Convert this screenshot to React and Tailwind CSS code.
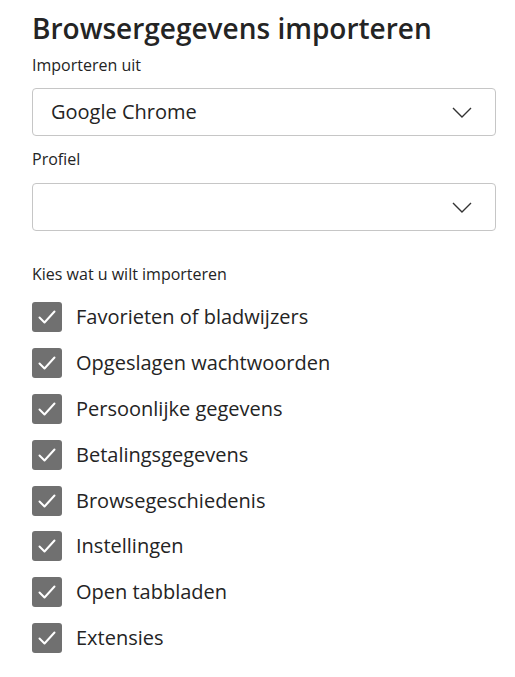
import { useState } from "react";

const items = [
  "Favorieten of bladwijzers",
  "Opgeslagen wachtwoorden",
  "Persoonlijke gegevens",
  "Betalingsgegevens",
  "Browsegeschiedenis",
  "Instellingen",
  "Open tabbladen",
  "Extensies",
];

const Chevron = () => (
  <svg width="20" height="11" viewBox="0 0 20 11" fill="none" className="shrink-0">
    <path d="M1 1l9 9 9-9" stroke="#333" strokeWidth="1.4" />
  </svg>
);

const Select = ({ value }) => (
  <div className="flex h-[48px] w-[464px] items-center justify-between rounded-[4px] border border-[#c6c6c6] bg-white pl-[18px] pr-[23px]">
    <span className="text-[20px] text-[#242424]">{value}</span>
    <Chevron />
  </div>
);

const Checkbox = ({ checked, onToggle, label }) => (
  <button onClick={onToggle} className="flex items-center gap-[14px] text-left">
    <span
      className={`flex h-[30px] w-[30px] items-center justify-center rounded-[3px] ${
        checked ? "bg-[#707070]" : "border border-[#707070] bg-white"
      }`}
    >
      {checked && (
        <svg width="18" height="14" viewBox="0 0 18 14" fill="none">
          <path d="M1.5 7.5l5 5L16.5 1.5" stroke="#fff" strokeWidth="2" strokeLinecap="round" strokeLinejoin="round" />
        </svg>
      )}
    </span>
    <span className="text-[20px] text-[#242424]">{label}</span>
  </button>
);

export default function App() {
  const [checked, setChecked] = useState(items.map(() => true));

  const toggle = (i) => setChecked(checked.map((c, j) => (j === i ? !c : c)));

  return (
    <div className="min-h-screen bg-white pl-[32px] pt-[8px] font-['Open_Sans',sans-serif] text-[#242424]">
      <h1 className="text-[28px] font-semibold leading-[40px]">Browsergegevens importeren</h1>
      <p className="mt-[5px] text-[16px] leading-[24px]">Importeren uit</p>
      <div className="mt-[11px]">
        <Select value="Google Chrome" />
      </div>
      <p className="mt-[11px] text-[16px] leading-[24px]">Profiel</p>
      <div className="mt-[12px]">
        <Select value="" />
      </div>
      <p className="mt-[31px] text-[16px] leading-[24px]">Kies wat u wilt importeren</p>
      <div className="mt-[16px] flex flex-col gap-[15.9px]">
        {items.map((label, i) => (
          <Checkbox key={label} label={label} checked={checked[i]} onToggle={() => toggle(i)} />
        ))}
      </div>
    </div>
  );
}
